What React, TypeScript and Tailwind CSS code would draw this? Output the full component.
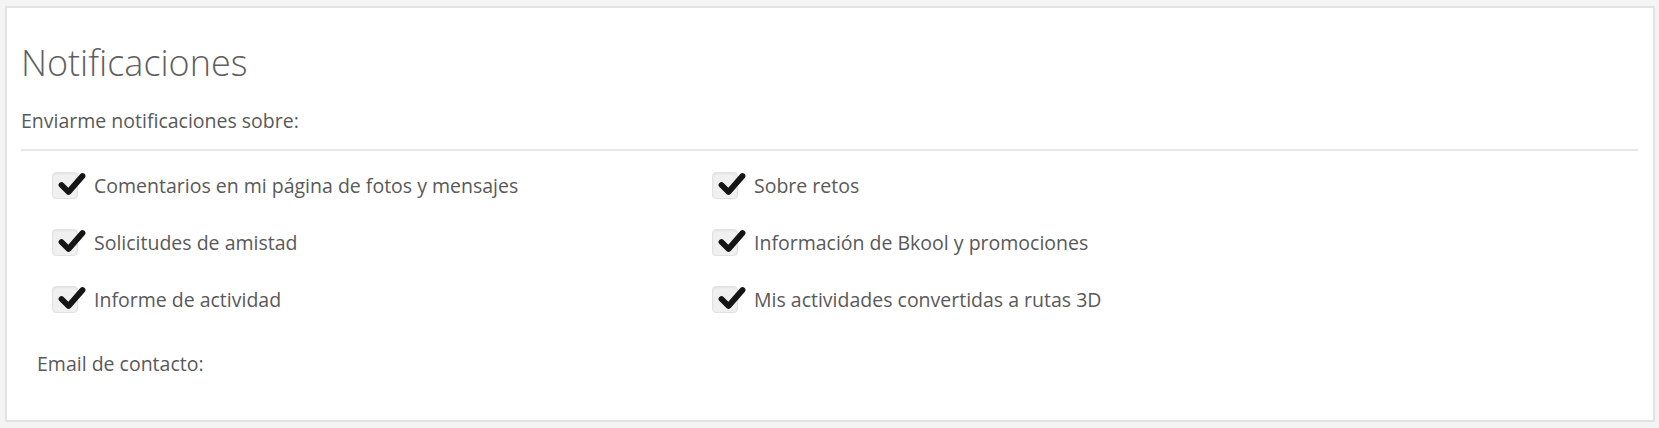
import React from "react";

const left = [
  "Comentarios en mi página de fotos y mensajes",
  "Solicitudes de amistad",
  "Informe de actividad",
];
const right = [
  "Sobre retos",
  "Información de Bkool y promociones",
  "Mis actividades convertidas a rutas 3D",
];

function Check({ label }: { label: string }) {
  return (
    <div className="h-[57px] flex items-center">
      <div className="relative w-[26px] h-[27px] shrink-0 rounded-[4px] bg-[#f0f0f0] border border-[#e2e2e2] shadow-[inset_0_1px_2px_rgba(0,0,0,0.06)]">
        <svg
          className="absolute left-[5px] top-[-1px]"
          width="28"
          height="24"
          viewBox="0 0 28 24"
        >
          <polyline
            points="3.5,13 10.5,20 24.5,4"
            fill="none"
            stroke="#151515"
            strokeWidth="5.8"
            strokeLinecap="round"
            strokeLinejoin="round"
          />
        </svg>
      </div>
      <span className="ml-[16px] text-[19.5px] leading-[24px] text-[#595959]">{label}</span>
    </div>
  );
}

export default function App() {
  return (
    <div
      className="bg-[#f4f4f4] pt-[6px] pl-[5px] pr-[4px] pb-[6px]"
      style={{ fontFamily: '"Open Sans", "Liberation Sans", sans-serif' }}
    >
      <div className="h-[416px] bg-white border-2 border-[#e3e3e3] pl-[14px] pr-[15px] pt-[35px]">
        <h1 className="text-[36px] leading-[40px] font-light text-[#5f5f5f]">Notificaciones</h1>
        <p className="mt-[26px] text-[19.5px] leading-[24px] text-[#595959]">
          Enviarme notificaciones sobre:
        </p>
        <div className="mt-[16px] h-[2px] bg-[#e6e6e6]" />
        <div className="pt-[6px] pl-[31px] grid grid-cols-[660px_1fr]">
          <div className="flex flex-col">
            {left.map((l) => (
              <Check key={l} label={l} />
            ))}
          </div>
          <div className="flex flex-col">
            {right.map((l) => (
              <Check key={l} label={l} />
            ))}
          </div>
        </div>
        <p className="mt-[24px] pl-[16px] text-[19.5px] leading-[24px] text-[#595959]">
          Email de contacto:
        </p>
      </div>
    </div>
  );
}
